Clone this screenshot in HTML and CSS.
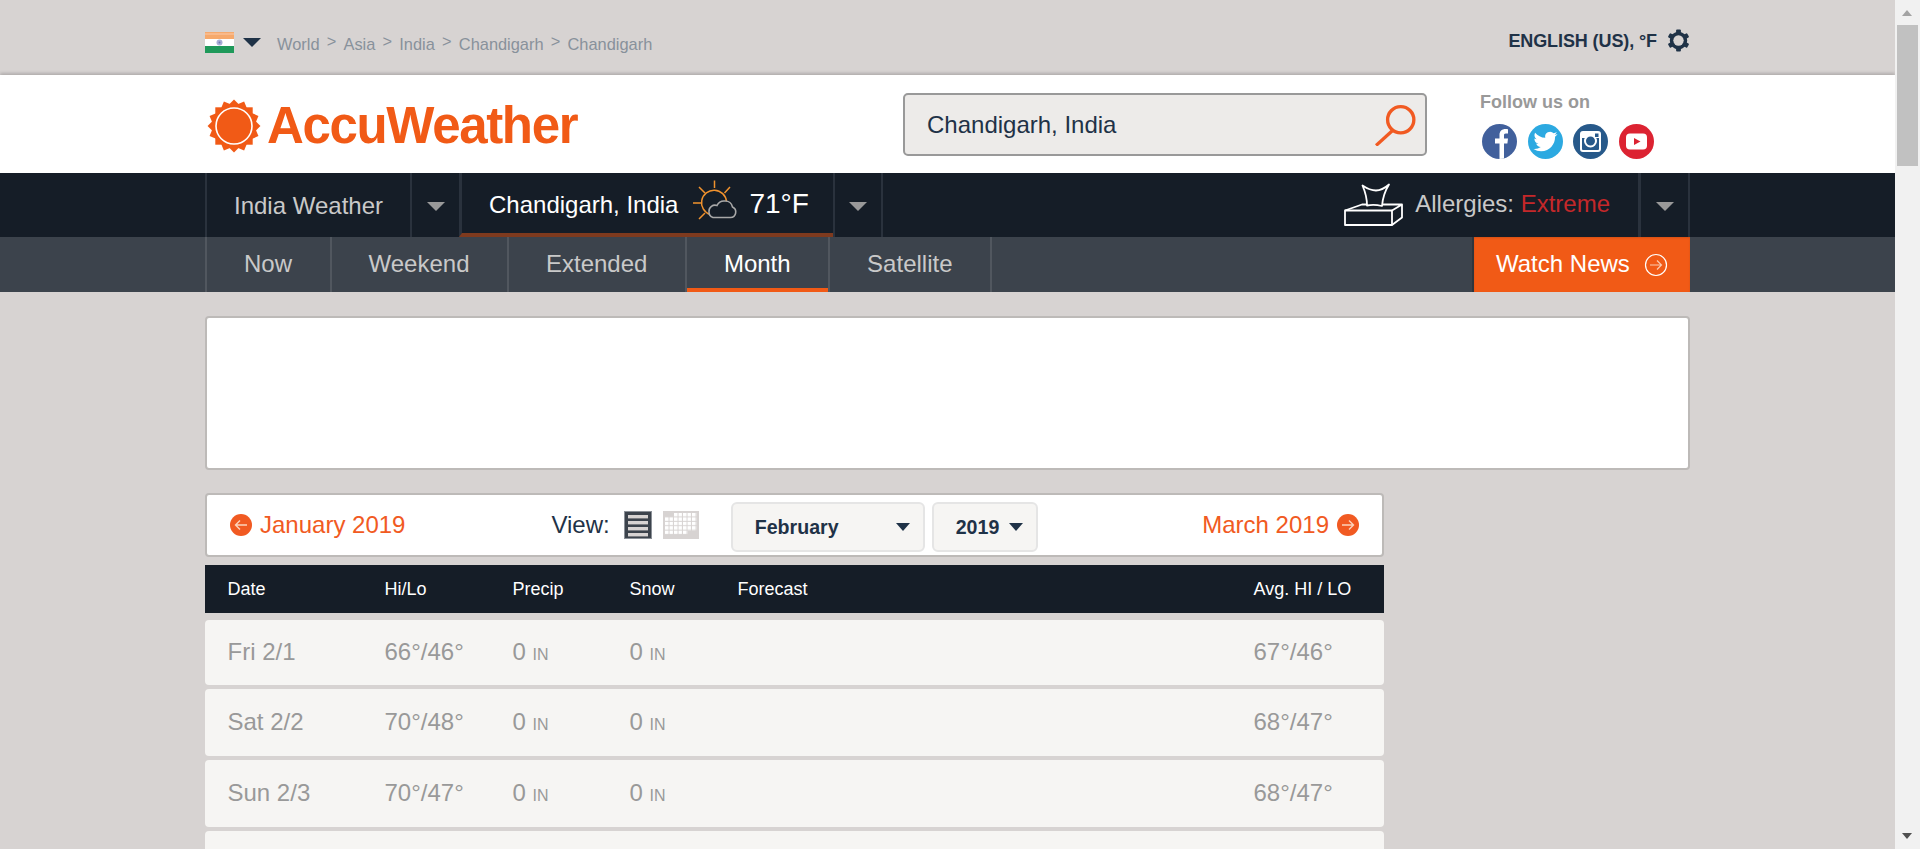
FILE: index.html
```html
<!DOCTYPE html>
<html lang="en">
<head>
<meta charset="utf-8">
<title>Chandigarh, India Monthly Weather - AccuWeather</title>
<link rel="stylesheet" href="styles.css">
</head>
<body>
<div class="page">
  <main class="main">
    <div class="topbar">
      <div class="wrap topbar-in">
        <svg class="flag" viewBox="0 0 29 21"><rect width="29" height="7" fill="#f6a96c"/><rect y="1" width="29" height="2" fill="#f9b98a"/><rect y="7" width="29" height="7" fill="#fff"/><rect y="14" width="29" height="7" fill="#1f995a"/><circle cx="14.5" cy="10.5" r="3" fill="#a9aed6"/><circle cx="14.5" cy="10.5" r="1" fill="#6f78b4"/></svg>
        <span class="caret caret-flag"></span>
        <nav class="crumbs">
          <a>World</a><i>&gt;</i><a>Asia</a><i>&gt;</i><a>India</a><i>&gt;</i><a>Chandigarh</a><i>&gt;</i><a>Chandigarh</a>
        </nav>
        <div class="locale">
          <span>ENGLISH (US), °F</span>
          <svg class="gear" viewBox="0 0 24 24"><circle cx="12" cy="12" r="7.2" fill="none" stroke="#1f3247" stroke-width="3.8"/><g fill="#1f3247"><rect x="9.5" y="0.5" width="5" height="23" rx="1"/><rect x="9.5" y="0.5" width="5" height="23" rx="1" transform="rotate(60 12 12)"/><rect x="9.5" y="0.5" width="5" height="23" rx="1" transform="rotate(120 12 12)"/></g><circle cx="12" cy="12" r="5.4" fill="#d7d3d2"/></svg>
        </div>
      </div>
    </div>

    <header class="header">
      <div class="wrap header-in">
        <div class="logo">
          <svg class="sun" viewBox="0 0 54 54">
            <g fill="#f15a16">
              <circle cx="27" cy="27" r="21"/>
              <rect x="8.3" y="8.3" width="37.4" height="37.4"/>
              <rect x="8.3" y="8.3" width="37.4" height="37.4" transform="rotate(22.5 27 27)"/>
              <rect x="8.3" y="8.3" width="37.4" height="37.4" transform="rotate(45 27 27)"/>
              <rect x="8.3" y="8.3" width="37.4" height="37.4" transform="rotate(67.5 27 27)"/>
            </g>
            <circle cx="27" cy="27" r="18" fill="#f15a16" stroke="#fff" stroke-width="1.6"/>
          </svg>
          <span class="logo-text">AccuWeather</span>
        </div>
        <div class="search">
          <span>Chandigarh, India</span>
          <svg class="search-icon" viewBox="0 0 40 40"><circle cx="24.5" cy="15" r="12.5" fill="none" stroke="#f15a22" stroke-width="3.2"/><path d="M17 25 L1 39.5" fill="none" stroke="#f15a22" stroke-width="3.2"/></svg>
        </div>
        <div class="follow">
          <div class="follow-title">Follow us on</div>
          <div class="socials">
            <svg class="social" viewBox="0 0 35 35"><clipPath id="c1"><circle cx="17.5" cy="17.5" r="17.5"/></clipPath><circle cx="17.5" cy="17.5" r="17.5" fill="#41609c"/><path clip-path="url(#c1)" fill="#fff" d="M17.5 35 V19.5 H13 V14.5 H17.5 V11 C17.5 7 20 5 23.5 5 C24.6 5 25.6 5.1 26 5.2 V9.6 H23.8 C22.2 9.6 22 10.4 22 11.6 V14.5 H26 L25.4 19.5 H22 V35 Z"/></svg>
            <svg class="social" viewBox="0 0 35 35"><circle cx="17.5" cy="17.5" r="17.5" fill="#2ca9e1"/><g transform="translate(5.5 5.5)"><path fill="#fff" d="M23.953 4.57a10 10 0 01-2.825.775 4.958 4.958 0 002.163-2.723c-.951.555-2.005.959-3.127 1.184a4.92 4.92 0 00-8.384 4.482C7.69 8.095 4.067 6.13 1.64 3.162a4.822 4.822 0 00-.666 2.475c0 1.71.87 3.213 2.188 4.096a4.904 4.904 0 01-2.228-.616v.06a4.923 4.923 0 003.946 4.827 4.996 4.996 0 01-2.212.085 4.936 4.936 0 004.604 3.417 9.867 9.867 0 01-6.102 2.105c-.39 0-.779-.023-1.17-.067a13.995 13.995 0 007.557 2.209c9.053 0 13.998-7.496 13.998-13.985 0-.21 0-.42-.015-.63A9.935 9.935 0 0024 4.59z"/></g></svg>
            <svg class="social" viewBox="0 0 35 35"><circle cx="17.5" cy="17.5" r="17.5" fill="#27598a"/><rect x="8" y="8" width="19" height="19" rx="2" fill="none" stroke="#fff" stroke-width="2"/><rect x="8" y="8" width="19" height="6" fill="#fff"/><circle cx="17.5" cy="17" r="5.5" fill="#27598a" stroke="#fff" stroke-width="2"/><rect x="22" y="9.5" width="3.5" height="3.5" fill="#27598a"/></svg>
            <svg class="social" viewBox="0 0 35 35"><circle cx="17.5" cy="17.5" r="17.5" fill="#dc2332"/><rect x="7" y="9.5" width="21" height="16" rx="4" fill="#fff"/><path d="M15 14 L21.5 17.5 L15 21 Z" fill="#dc2332"/></svg>
          </div>
        </div>
      </div>
    </header>

    <div class="nav">
      <div class="wrap nav-in">
        <div class="nav-cell nav-country">India Weather</div>
        <div class="nav-cell nav-drop"><span class="caret caret-gray"></span></div>
        <div class="nav-cell nav-current">
          <span>Chandigarh, India</span>
          <svg class="wx-icon" viewBox="0 0 45 40">
            <g fill="none" stroke="#f0922e" stroke-width="1.5">
              <path d="M21.5 0.5 V8 M6 7 L12 13 M0 23 H8.5 M6 39 L12 33 M37 7 L31.5 13"/>
              <path d="M17 34.5 A12.5 12.5 0 1 1 33.5 21.5"/>
            </g>
            <path d="M20 37.5 H37.5 A5.5 5.5 0 0 0 39.5 27 A7.5 7.5 0 0 0 32 21 A8 8 0 0 0 24 25.5 A6 6 0 0 0 16 31.5 A6 6 0 0 0 20 37.5 Z" fill="#151d27" stroke="#a8a8a8" stroke-width="1.6"/>
          </svg>
          <span class="temp">71°F</span>
        </div>
        <div class="nav-cell nav-drop nav-drop-end"><span class="caret caret-gray"></span></div>
        <div class="allergy">
          <svg class="tissue" viewBox="3 7 60 45">
            <g fill="none" stroke="#fff" stroke-width="1.8" stroke-linejoin="round">
              <path d="M5 34.5 H52 V49 H5 Z"/>
              <path d="M5 34.5 L22 28.5 H27 M42 28.5 H62 L52 34.5 M62 28.5 V41.5 L52 49"/>
              <path d="M27 29.5 Q27 20 22.5 9.5 Q30 14.5 36 14.5 Q42 14.5 49 8.5 Q43 18 42 30 Q34 28 27 29.5 Z"/>
            </g>
          </svg>
          <span class="allergy-text">Allergies: <b>Extreme</b></span>
        </div>
        <div class="nav-cell nav-drop nav-drop-last"><span class="caret caret-gray"></span></div>
      </div>
    </div>

    <div class="subnav">
      <div class="wrap subnav-in">
        <a class="sub-item">Now</a>
        <a class="sub-item">Weekend</a>
        <a class="sub-item">Extended</a>
        <a class="sub-item is-active">Month</a>
        <a class="sub-item sub-item-last">Satellite</a>
        <a class="watch">Watch News
          <svg class="watch-icon" viewBox="0 0 24 24"><circle cx="12" cy="12" r="10.5" fill="none" stroke="#fff" stroke-width="1.2"/><path d="M6 12 H17.5 M13 7.5 L17.5 12 L13 16.5" fill="none" stroke="#fbcbb0" stroke-width="1.2"/></svg>
        </a>
      </div>
    </div>

    <div class="wrap">
      <div class="ad"></div>

      <section class="month">
        <div class="toolbar">
          <a class="month-link">
            <svg class="round-arrow" viewBox="0 0 22 22"><circle cx="11" cy="11" r="11" fill="#f15a22"/><path d="M17 11 H5.5 M10 6.5 L5.5 11 L10 15.5" fill="none" stroke="#fcd3bc" stroke-width="1.4"/></svg>
            <span>January 2019</span>
          </a>
          <span class="view-label">View:</span>
          <svg class="view-list" viewBox="0 0 28 28"><rect x="0.5" y="0.5" width="27" height="27" fill="#3c434c" stroke="#8b9097"/><g fill="#d7d3d2"><rect x="4" y="4" width="20" height="3.4"/><rect x="4" y="10" width="20" height="3.4"/><rect x="4" y="16" width="20" height="3.4"/><rect x="4" y="22" width="20" height="3.4"/></g></svg>
          <svg class="view-cal" viewBox="0 0 36 28"><defs><pattern id="cells" x="2" y="2" width="4.5" height="4.4" patternUnits="userSpaceOnUse"><rect width="3.5" height="3.4" fill="#fff"/></pattern></defs><rect width="36" height="28" fill="#d7d3d2"/><rect x="2" y="2" width="31.5" height="22" fill="url(#cells)"/><rect x="1" y="1.5" width="10" height="4.4" fill="#d7d3d2"/><rect x="24.5" y="19.6" width="10" height="5" fill="#d7d3d2"/></svg>
          <div class="select select-month"><span>February</span><span class="caret caret-dark"></span></div>
          <div class="select select-year"><span>2019</span><span class="caret caret-dark"></span></div>
          <a class="month-link month-next">
            <span>March 2019</span>
            <svg class="round-arrow" viewBox="0 0 22 22"><circle cx="11" cy="11" r="11" fill="#f15a22"/><path d="M5 11 H16.5 M12 6.5 L16.5 11 L12 15.5" fill="none" stroke="#fcd3bc" stroke-width="1.4"/></svg>
          </a>
        </div>

        <div class="grid-row table-head">
          <span>Date</span><span>Hi/Lo</span><span>Precip</span><span>Snow</span><span>Forecast</span><span>Avg. HI / LO</span>
        </div>
        <div class="rows">
          <div class="grid-row day day-first"><span>Fri 2/1</span><span>66°/46°</span><span>0 <small>IN</small></span><span>0 <small>IN</small></span><span></span><span>67°/46°</span></div>
          <div class="grid-row day"><span>Sat 2/2</span><span>70°/48°</span><span>0 <small>IN</small></span><span>0 <small>IN</small></span><span></span><span>68°/47°</span></div>
          <div class="grid-row day"><span>Sun 2/3</span><span>70°/47°</span><span>0 <small>IN</small></span><span>0 <small>IN</small></span><span></span><span>68°/47°</span></div>
          <div class="grid-row day"></div>
        </div>
      </section>
    </div>
  </main>

  <aside class="scrollbar">
    <span class="sb-arrow sb-up"></span>
    <span class="sb-thumb"></span>
    <span class="sb-arrow sb-down"></span>
  </aside>
</div>
</body>
</html>
```

FILE: styles.css
```css
* { box-sizing: border-box; }
html, body { margin: 0; height: 100%; overflow: hidden; }
body { font-family: "Liberation Sans", Arial, sans-serif; background: #d7d3d2; color: #1f3247; }
a { color: inherit; text-decoration: none; }

.page { display: flex; height: 849px; overflow: hidden; }
.main { flex: 1 1 auto; min-width: 0; height: 849px; overflow: hidden; }
.wrap { width: 1485px; margin: 0 auto; }

/* caret triangles */
.caret { display: block; width: 0; height: 0; border-style: solid; border-color: transparent; border-bottom-width: 0; }
.caret-flag { border-width: 9px 9px 0; border-top-color: #1f3247; margin: 6px 16px 0 9px; }
.caret-gray { border-width: 9px 9px 0; border-top-color: #999; }
.caret-dark { border-width: 8px 7.5px 0; border-top-color: #1f3247; }

/* top bar */
.topbar { height: 75px; }
.topbar-in { display: flex; align-items: flex-start; padding-top: 32px; }
.flag { width: 29px; height: 21px; display: block; }
.crumbs { display: flex; gap: 7.2px; font-size: 16.4px; line-height: 24px; color: #88919b; }
.crumbs i { font-style: normal; margin-top: -3px; }
.locale { margin-left: auto; display: flex; align-items: center; gap: 10px; font-size: 18px; font-weight: 700; margin-top: -2px; letter-spacing: -.1px; color: #1f3247; }
.gear { width: 23px; height: 23px; display: block; margin-top: -1px; }

/* header */
.header { height: 98px; background: #fff; box-shadow: 0 -2px 3px rgba(0,0,0,.18); position: relative; }
.header-in { display: grid; grid-template-columns: 698px 524px 1fr; align-items: start; }
.logo { display: flex; align-items: center; padding: 23px 0 0 2px; gap: 6px; }
.sun { width: 54px; height: 54px; display: block; }
.logo-text { font-size: 51px; line-height: 54px; font-weight: 700; letter-spacing: -1.35px; color: #f15a16; padding-top: 1px; }
.search { margin-top: 18px; height: 63px; background: #edebe9; border: 2px solid #999; border-radius: 5px; display: flex; align-items: center; justify-content: space-between; padding: 0 8px 0 22px; font-size: 24px; color: #1f3247; }
.search-icon { width: 42px; height: 42px; display: block; margin-top: 0; }
.follow { padding: 16px 0 0 53px; }
.follow-title { font-size: 18px; line-height: 22px; font-weight: 700; color: #999; }
.socials { display: flex; gap: 10.5px; margin: 11px 0 0 2px; }
.social { width: 35px; height: 35px; display: block; }

/* main nav */
.nav { background: #151d27; height: 64px; position: relative; }
.nav-in { display: flex; height: 64px; border-left: 2px solid #2a323d; }
.nav-cell { display: flex; align-items: center; height: 64px; font-size: 24px; }
.nav-country { width: 203px; padding: 2px 0 0 27px; color: #c9c9c9; }
.nav-drop { border-left: 2px solid #2a323d; width: 49px; justify-content: center; padding-top: 2px; }
.nav-drop-end { width: 50px; border-right: 2px solid #2a323d; }
.nav-current { width: 374px; padding: 4px 0 0 27px; color: #fff; border-left: 3px solid #2a323d; border-bottom: 4px solid #7e3a1e; }
.wx-icon { width: 45px; height: 40px; display: block; margin: 0 11px 10px 15px; }
.temp { font-size: 28px; margin-top: -2px; }
.allergy { margin-left: auto; display: flex; align-items: center; color: #c9c9c9; font-size: 24px; margin-right: 28px; }
.allergy-text { padding-bottom: 2px; }
.allergy-text b { font-weight: 400; color: #c4282a; }
.tissue { width: 60px; height: 45px; display: block; margin-right: 12px; }
.nav-drop-last { width: 52px; border-left: 3px solid #2a323d; border-right: 2px solid #2a323d; }

/* sub nav */
.subnav { background: #3c434c; height: 55px; }
.subnav-in { display: flex; height: 55px; font-size: 24px; color: #c9c9c9; }
.sub-item { display: flex; align-items: center; padding: 0 37.5px 2px 37px; border-left: 2px solid #51575f; }
.sub-item.is-active { color: #fff; box-shadow: inset 0 -4px 0 #f15a16; }
.sub-item-last { border-right: 2px solid #51575f; }
.watch { margin-left: auto; width: 218px; background: #f15a16; color: #fff; display: flex; align-items: center; padding: 0 0 2px 22px; border-left: 2px solid #2f353d; box-shadow: inset 0 1px 2px rgba(0,0,0,.12); }
.watch-icon { width: 24px; height: 24px; display: block; margin: 3px 0 0 14px; }

/* ad */
.ad { margin-top: 24px; height: 154px; background: #fff; border: 2px solid #bdbab8; border-radius: 4px; }

/* month */
.month { width: 1179px; margin-top: 23px; }
.toolbar { height: 64px; background: #fff; border: 2px solid #bdbab8; border-radius: 4px; display: flex; align-items: center; padding: 0 23px; }
.month-link { display: flex; align-items: center; gap: 8px; font-size: 24px; color: #f15a22; }
.round-arrow { width: 22px; height: 22px; display: block; }
.view-label { font-size: 24px; color: #1f3247; margin-left: 146px; }
.view-list { width: 28px; height: 28px; display: block; margin-left: 14px; }
.view-cal { width: 36px; height: 28px; display: block; margin-left: 11px; }
.select { height: 50px; background: #f6f5f3; border: 2px solid #e5e5e5; border-radius: 6px; display: flex; align-items: center; justify-content: space-between; font-size: 19.6px; font-weight: 700; color: #1f3247; margin-top: 4px; }
.select-month { width: 194px; margin-left: 32px; padding: 0 13px 0 22px; }
.select-year { width: 106px; margin-left: 7px; padding: 0 13px 0 22px; }
.month-next { margin-left: auto; }

/* table */
.grid-row { display: grid; grid-template-columns: 157px 128px 117px 108px 516px 130px; align-items: center; padding-left: 22.5px; }
.table-head { margin-top: 8px; height: 48px; background: #151d27; color: #fff; font-size: 18px; }
.rows { display: flex; flex-direction: column; gap: 4px; margin-top: 7px; }
.day { height: 67px; background: #f6f5f3; border-radius: 4px; font-size: 24px; color: #999; padding-bottom: 2px; }
.day-first { height: 65px; }
.day small { font-size: 16px; }

/* scrollbar */
.scrollbar { flex: 0 0 25px; position: relative; background: #f1f1f1; height: 849px; }
.sb-thumb { position: absolute; left: 2px; top: 25px; width: 21px; height: 141px; background: #c1c1c1; }
.sb-arrow { position: absolute; left: 7px; width: 0; height: 0; border-style: solid; border-color: transparent; }
.sb-up { top: 10px; border-width: 0 5.5px 6px; border-bottom-color: #a3a3a3; }
.sb-down { bottom: 10px; border-width: 6px 5.5px 0; border-top-color: #505050; }
```
